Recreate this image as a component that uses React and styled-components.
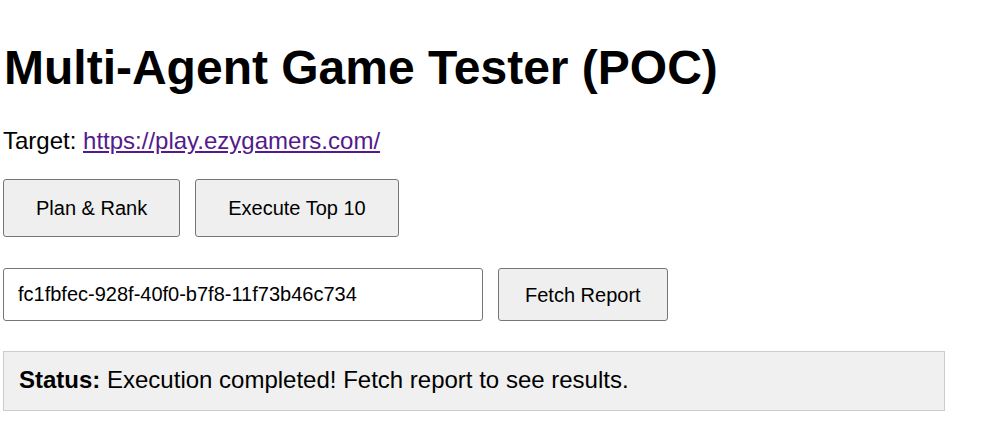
import React from "react";
import styled, { createGlobalStyle } from "styled-components";

const Global = createGlobalStyle`
  html, body { margin: 0; padding: 0; background: #fff; }
  body { font-family: "Liberation Sans", Arial, sans-serif; color: #000; }
`;

const Page = styled.div`
  padding: 40px 0 0 3px;
  width: 942px;
`;

const Title = styled.h1`
  margin: 0 0 32px 1px;
  font-size: 48px;
  line-height: 55px;
  font-weight: 700;
`;

const TargetLine = styled.p`
  margin: 0 0 24px 0;
  font-size: 24px;
  line-height: 28px;
`;

const Link = styled.a`
  color: #551a8b;
  text-decoration: underline;
`;

const Row = styled.div`
  display: flex;
  gap: 15px;
  margin-bottom: ${(p) => p.$mb || 0}px;
`;

const Button = styled.button`
  font-family: "Liberation Sans", Arial, sans-serif;
  font-size: 20px;
  line-height: 24px;
  padding: ${(p) => (p.$compact ? "14px 26px 13px" : "16px 32px")};
  background: #efefef;
  color: #000;
  border: 1px solid #767676;
  border-radius: 3px;
`;

const Input = styled.input`
  font-family: "Liberation Sans", Arial, sans-serif;
  font-size: 20px;
  line-height: 23px;
  width: 480px;
  height: 53px;
  box-sizing: border-box;
  padding: 0 14px;
  border: 1px solid #767676;
  border-radius: 3px;
  color: #000;
  background: #fff;
`;

const Status = styled.div`
  box-sizing: border-box;
  width: 942px;
  padding: 14px 15px 16px;
  font-size: 24px;
  line-height: 28px;
  background: #f0f0f0;
  border: 1px solid #cccccc;
`;

export default function App() {
  return (
    <>
      <Global />
      <Page>
        <Title>Multi-Agent Game Tester (POC)</Title>
        <TargetLine>
          Target: <Link href="https://play.ezygamers.com/">https://play.ezygamers.com/</Link>
        </TargetLine>
        <Row $mb={31}>
          <Button>Plan &amp; Rank</Button>
          <Button>Execute Top 10</Button>
        </Row>
        <Row $mb={30}>
          <Input defaultValue="fc1fbfec-928f-40f0-b7f8-11f73b46c734" />
          <Button $compact>Fetch Report</Button>
        </Row>
        <Status>
          <strong>Status:</strong> Execution completed! Fetch report to see results.
        </Status>
      </Page>
    </>
  );
}
